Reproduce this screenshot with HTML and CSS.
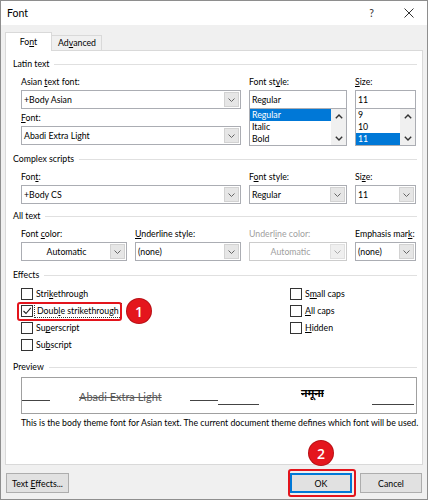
FILE: index.html
```html
<!DOCTYPE html>
<html lang="en">
<head>
<meta charset="utf-8">
<title>Font</title>
<link rel="stylesheet" href="styles.css">
</head>
<body>
<div class="window">
  <div class="titlebar">
    <span class="title">Font</span>
    <span class="help">?</span>
    <span class="close"><svg width="10" height="10" viewBox="0 0 10 10"><path d="M0.5 0.5L9.5 9.5M9.5 0.5L0.5 9.5" stroke="#333" stroke-width="1" fill="none"/></svg></span>
  </div>
  <div class="client">
    <div class="tabs">
      <div class="tab active">Fo<u>n</u>t</div>
      <div class="tab">Ad<u>v</u>anced</div>
    </div>
    <div class="panel">
      <div class="group-h g-latin"><span>Latin text</span><i></i></div>
      <div class="fields f-latin">
        <div class="col c-wide">
          <div class="lbl">Asian <u>t</u>ext font:</div>
          <div class="combo"><span class="val">+Body Asian</span><span class="dd"><svg width="7" height="4" viewBox="0 0 7 4"><polyline points="0.5,0.5 3.5,3.5 6.5,0.5" fill="none" stroke="#666" stroke-width="1"/></svg></span></div>
          <div class="lbl lbl-2"><u>F</u>ont:</div>
          <div class="combo"><span class="val">Abadi Extra Light</span><span class="dd"><svg width="7" height="4" viewBox="0 0 7 4"><polyline points="0.5,0.5 3.5,3.5 6.5,0.5" fill="none" stroke="#666" stroke-width="1"/></svg></span></div>
        </div>
        <div class="col">
          <div class="lbl">Font st<u>y</u>le:</div>
          <div class="edit"><span class="val">Regular</span></div>
          <div class="list">
            <div class="items"><div class="item sel">Regular</div><div class="item">Italic</div><div class="item">Bold</div></div>
            <div class="sb">
              <svg width="8" height="5" viewBox="0 0 8 5"><polyline points="0.8,4.2 4,1 7.2,4.2" fill="none" stroke="#333" stroke-width="1.4"/></svg>
              <svg width="8" height="5" viewBox="0 0 8 5"><polyline points="0.8,0.8 4,4 7.2,0.8" fill="none" stroke="#333" stroke-width="1.4"/></svg>
            </div>
          </div>
        </div>
        <div class="col">
          <div class="lbl"><u>S</u>ize:</div>
          <div class="edit"><span class="val">11</span></div>
          <div class="list">
            <div class="items"><div class="item">9</div><div class="item">10</div><div class="item sel">11</div></div>
            <div class="sb">
              <svg width="8" height="5" viewBox="0 0 8 5"><polyline points="0.8,4.2 4,1 7.2,4.2" fill="none" stroke="#333" stroke-width="1.4"/></svg>
              <svg width="8" height="5" viewBox="0 0 8 5"><polyline points="0.8,0.8 4,4 7.2,0.8" fill="none" stroke="#333" stroke-width="1.4"/></svg>
            </div>
          </div>
        </div>
      </div>

      <div class="group-h g-complex"><span>Complex scripts</span><i></i></div>
      <div class="fields f-complex">
        <div class="col c-wide">
          <div class="lbl">Fon<u>t</u>:</div>
          <div class="combo"><span class="val">+Body CS</span><span class="dd"><svg width="7" height="4" viewBox="0 0 7 4"><polyline points="0.5,0.5 3.5,3.5 6.5,0.5" fill="none" stroke="#666" stroke-width="1"/></svg></span></div>
        </div>
        <div class="col">
          <div class="lbl">F<u>o</u>nt style:</div>
          <div class="combo"><span class="val">Regular</span><span class="dd"><svg width="7" height="4" viewBox="0 0 7 4"><polyline points="0.5,0.5 3.5,3.5 6.5,0.5" fill="none" stroke="#666" stroke-width="1"/></svg></span></div>
        </div>
        <div class="col">
          <div class="lbl">Si<u>z</u>e:</div>
          <div class="combo"><span class="val">11</span><span class="dd"><svg width="7" height="4" viewBox="0 0 7 4"><polyline points="0.5,0.5 3.5,3.5 6.5,0.5" fill="none" stroke="#666" stroke-width="1"/></svg></span></div>
        </div>
      </div>

      <div class="group-h g-all"><span>All text</span><i></i></div>
      <div class="fields f-all">
        <div class="col">
          <div class="lbl">Font <u>c</u>olor:</div>
          <div class="combo"><span class="val center">Automatic</span><span class="dd"><svg width="7" height="4" viewBox="0 0 7 4"><polyline points="0.5,0.5 3.5,3.5 6.5,0.5" fill="none" stroke="#666" stroke-width="1"/></svg></span></div>
        </div>
        <div class="col">
          <div class="lbl"><u>U</u>nderline style:</div>
          <div class="combo"><span class="val">(none)</span><span class="dd"><svg width="7" height="4" viewBox="0 0 7 4"><polyline points="0.5,0.5 3.5,3.5 6.5,0.5" fill="none" stroke="#666" stroke-width="1"/></svg></span></div>
        </div>
        <div class="col disabled">
          <div class="lbl">Underl<u>i</u>ne color:</div>
          <div class="combo"><span class="val center">Automatic</span><span class="dd"><svg width="7" height="4" viewBox="0 0 7 4"><polyline points="0.5,0.5 3.5,3.5 6.5,0.5" fill="none" stroke="#aaa" stroke-width="1"/></svg></span></div>
        </div>
        <div class="col">
          <div class="lbl">Emphasis mar<u>k</u>:</div>
          <div class="combo"><span class="val">(none)</span><span class="dd"><svg width="7" height="4" viewBox="0 0 7 4"><polyline points="0.5,0.5 3.5,3.5 6.5,0.5" fill="none" stroke="#666" stroke-width="1"/></svg></span></div>
        </div>
      </div>

      <div class="group-h g-effects"><span>Effects</span><i></i></div>
      <div class="effects">
        <div class="ecol ecol-left">
          <div class="chk"><span class="cb"></span><span>Stri<u>k</u>ethrough</span></div>
          <div class="chk"><span class="cb"><svg width="10" height="10" viewBox="0 0 10 10"><polyline points="1.5,5 4,7.5 8.8,1.8" fill="none" stroke="#222" stroke-width="1.1"/></svg></span><span class="focus">Doub<u>l</u>e strikethrough</span></div>
          <div class="chk"><span class="cb"></span><span>Su<u>p</u>erscript</span></div>
          <div class="chk"><span class="cb"></span><span>Su<u>b</u>script</span></div>
        </div>
        <div class="ecol">
          <div class="chk"><span class="cb"></span><span>S<u>m</u>all caps</span></div>
          <div class="chk"><span class="cb"></span><span><u>A</u>ll caps</span></div>
          <div class="chk"><span class="cb"></span><span><u>H</u>idden</span></div>
        </div>
      </div>

      <div class="group-h g-preview"><span>Preview</span><i></i></div>
      <div class="preview">
        <span class="pl pl1"></span>
        <span class="ptext">Abadi Extra Light</span>
        <span class="pl pl2"></span>
        <span class="pl pl3"></span>
        <span class="pdeva">नमूना</span>
        <span class="pl pl4"></span>
      </div>
      <div class="desc">This is the body theme font for Asian text. The current document theme defines which font will be used.</div>
    </div>
    <div class="buttons">
      <div class="btn btn-fx"><span>Text <u>E</u>ffects...</span></div>
      <div class="spacer"></div>
      <div class="btn btn-ok"><span>OK</span></div>
      <div class="btn btn-cancel"><span>Cancel</span></div>
    </div>
  </div>

  <div class="mark m1"></div>
  <div class="mark m2"></div>
  <div class="badge b1">1</div>
  <div class="badge b2">2</div>
</div>
</body>
</html>
```

FILE: styles.css
```css
* { box-sizing: border-box; }
html, body { margin: 0; padding: 0; }
body {
  width: 429px;
  height: 500px;
  overflow: hidden;
  background: #ffffff;
  font-family: Lato, "Noto Sans", sans-serif;
  font-size: 8.75px;
  color: #000;
}
u { text-decoration: underline; text-underline-offset: 1px; }

.window {
  position: relative;
  width: 428px;
  height: 500px;
  border: 1px solid #8e8e8e;
  background: #f0f0f0;
  display: flex;
  flex-direction: column;
}

.titlebar {
  height: 24px;
  background: #ffffff;
  display: flex;
  align-items: center;
  padding-left: 6px;
}
.title { font-size: 10.5px; flex: 1; }
.help { font-size: 10.5px; color: #333; margin-right: 30px; }
.close { display: flex; margin-right: 13px; }

.client {
  flex: 1;
  display: flex;
  flex-direction: column;
  padding: 7px 4px 0 4px;
}

.tabs { display: flex; align-items: flex-end; height: 18px; }
.tab {
  height: 15px;
  line-height: 14px;
  padding: 0 6px;
  border-top: 1px solid #d9d9d9;
  border-right: 1px solid #d9d9d9;
  background: #f0f0f0;
  text-align: center;
}
.tab.active {
  position: relative;
  z-index: 1;
  height: 19px;
  margin-bottom: -1px;
  width: 47px;
  line-height: 17px;
  border-left: 1px solid #d9d9d9;
  background: #ffffff;
}
.tab:not(.active) { width: 50px; }

.panel {
  width: 418px;
  height: 415px;
  background: #ffffff;
  border: 1px solid #d9d9d9;
  padding: 7px 5px 0 7px;
}

.group-h { display: flex; align-items: center; height: 12px; line-height: 12px; }
.group-h span { white-space: nowrap; }
.group-h i { flex: 1; height: 1px; background: #e0e0e0; margin-left: 5px; }
.g-complex { margin-top: 7px; }
.g-all { margin-top: 6px; }
.g-effects { margin-top: 8px; }
.g-preview { margin-top: 8px; }

.fields {
  display: grid;
  grid-template-columns: 106px 106px 98px 61px;
  column-gap: 8px;
  margin-left: 8px;
  margin-top: 6px;
}
.c-wide { grid-column: span 2; }
.col { display: flex; flex-direction: column; min-width: 0; }

.lbl { height: 12px; line-height: 12px; white-space: nowrap; }
.lbl-2 { margin-top: 3px; }

.combo, .edit {
  height: 19px;
  margin-top: 2px;
  border: 1px solid #abadb3;
  background: #fff;
  display: flex;
  align-items: stretch;
}
.val {
  flex: 1;
  display: flex;
  align-items: center;
  padding-left: 2px;
  white-space: nowrap;
  overflow: hidden;
}
.val.center { justify-content: center; }
.dd {
  width: 15px;
  margin: 1px;
  background: #e6e6e6;
  border: 1px solid #d2d2d2;
  display: flex;
  align-items: center;
  justify-content: center;
}

.list {
  height: 38px;
  margin-top: -1px;
  border: 1px solid #abadb3;
  display: flex;
  background: #fff;
}
.items { flex: 1; overflow: hidden; }
.item { height: 12px; line-height: 12px; padding-left: 2px; white-space: nowrap; }
.item.sel { background: #0078d7; color: #fff; }
.sb {
  width: 15px;
  background: #f0f0f0;
  display: flex;
  flex-direction: column;
  justify-content: space-between;
  align-items: center;
  padding: 5px 0 4px;
}

.disabled .lbl { color: #a0a0a0; }
.disabled .combo { border-color: #cccccc; }
.disabled .val { color: #a0a0a0; }
.disabled .dd { background: #efefef; border-color: #e0e0e0; }

.effects {
  display: flex;
  margin-left: 8px;
  margin-top: 4px;
}
.ecol { display: flex; flex-direction: column; }
.ecol-left { width: 269px; }
.chk { height: 17px; display: flex; align-items: center; white-space: nowrap; }
.cb {
  width: 12px;
  height: 12px;
  border: 1px solid #333;
  background: #fff;
  margin-right: 3px;
  display: flex;
  align-items: center;
  justify-content: center;
}
.focus { outline: 1px dotted #333; outline-offset: 1px; padding: 0 1px; }

.preview {
  margin-left: 8px;
  margin-top: 4px;
  height: 37px;
  border: 1px solid #a0a0a0;
  display: flex;
  align-items: flex-start;
}
.pl { display: block; height: 1px; background: #444; }
.pl1 { width: 28px; margin-top: 22px; }
.ptext {
  margin-left: 29px;
  margin-top: 12px;
  font-weight: 400;
  font-size: 11px;
  color: #595959;
  text-decoration: line-through;
  white-space: nowrap;
  width: 82px;
}
.pl2 { width: 28px; margin-left: 29px; margin-top: 22px; }
.pl3 { width: 41px; margin-top: 26px; }
.pdeva {
  margin-left: 42px;
  margin-top: 10px;
  font-family: "Noto Sans Devanagari", "Lohit Devanagari", "FreeSans", "Noto Sans", sans-serif;
  font-size: 10.5px;
  font-weight: 700;
  text-decoration: line-through;
  width: 71px;
  white-space: nowrap;
}
.pl4 { width: 42px; margin-top: 26px; }

.desc {
  margin-left: 8px;
  margin-top: 3px;
  height: 12px;
  line-height: 12px;
  white-space: nowrap;
}

.buttons {
  display: flex;
  margin-top: 8px;
  height: 20px;
}
.spacer { flex: 1; }
.btn {
  height: 20px;
  border: 1px solid #adadad;
  background: #e1e1e1;
  display: flex;
  align-items: center;
  justify-content: center;
  white-space: nowrap;
}
.btn-fx { width: 63px; margin-left: 1px; }
.btn-ok { width: 62px; border: 2px solid #0078d7; margin-right: 8px; }
.btn-cancel { width: 62px; margin-right: 1px; }

.mark {
  position: absolute;
  border: 2px solid #e3141c;
  border-radius: 3px;
}
.m1 { left: 16px; top: 301px; width: 105px; height: 19px; }
.m2 { left: 287px; top: 468px; width: 68px; height: 28px; }

.badge {
  position: absolute;
  width: 24px;
  height: 24px;
  border-radius: 50%;
  background: #e4161d;
  box-shadow: 0 0 0 1px #b80f14;
  color: #fff;
  font-family: "Open Sans", sans-serif;
  font-weight: 600;
  font-size: 14px;
  display: flex;
  align-items: center;
  justify-content: center;
}
.b1 { left: 126px; top: 298px; }
.b2 { left: 308px; top: 440px; }
```
